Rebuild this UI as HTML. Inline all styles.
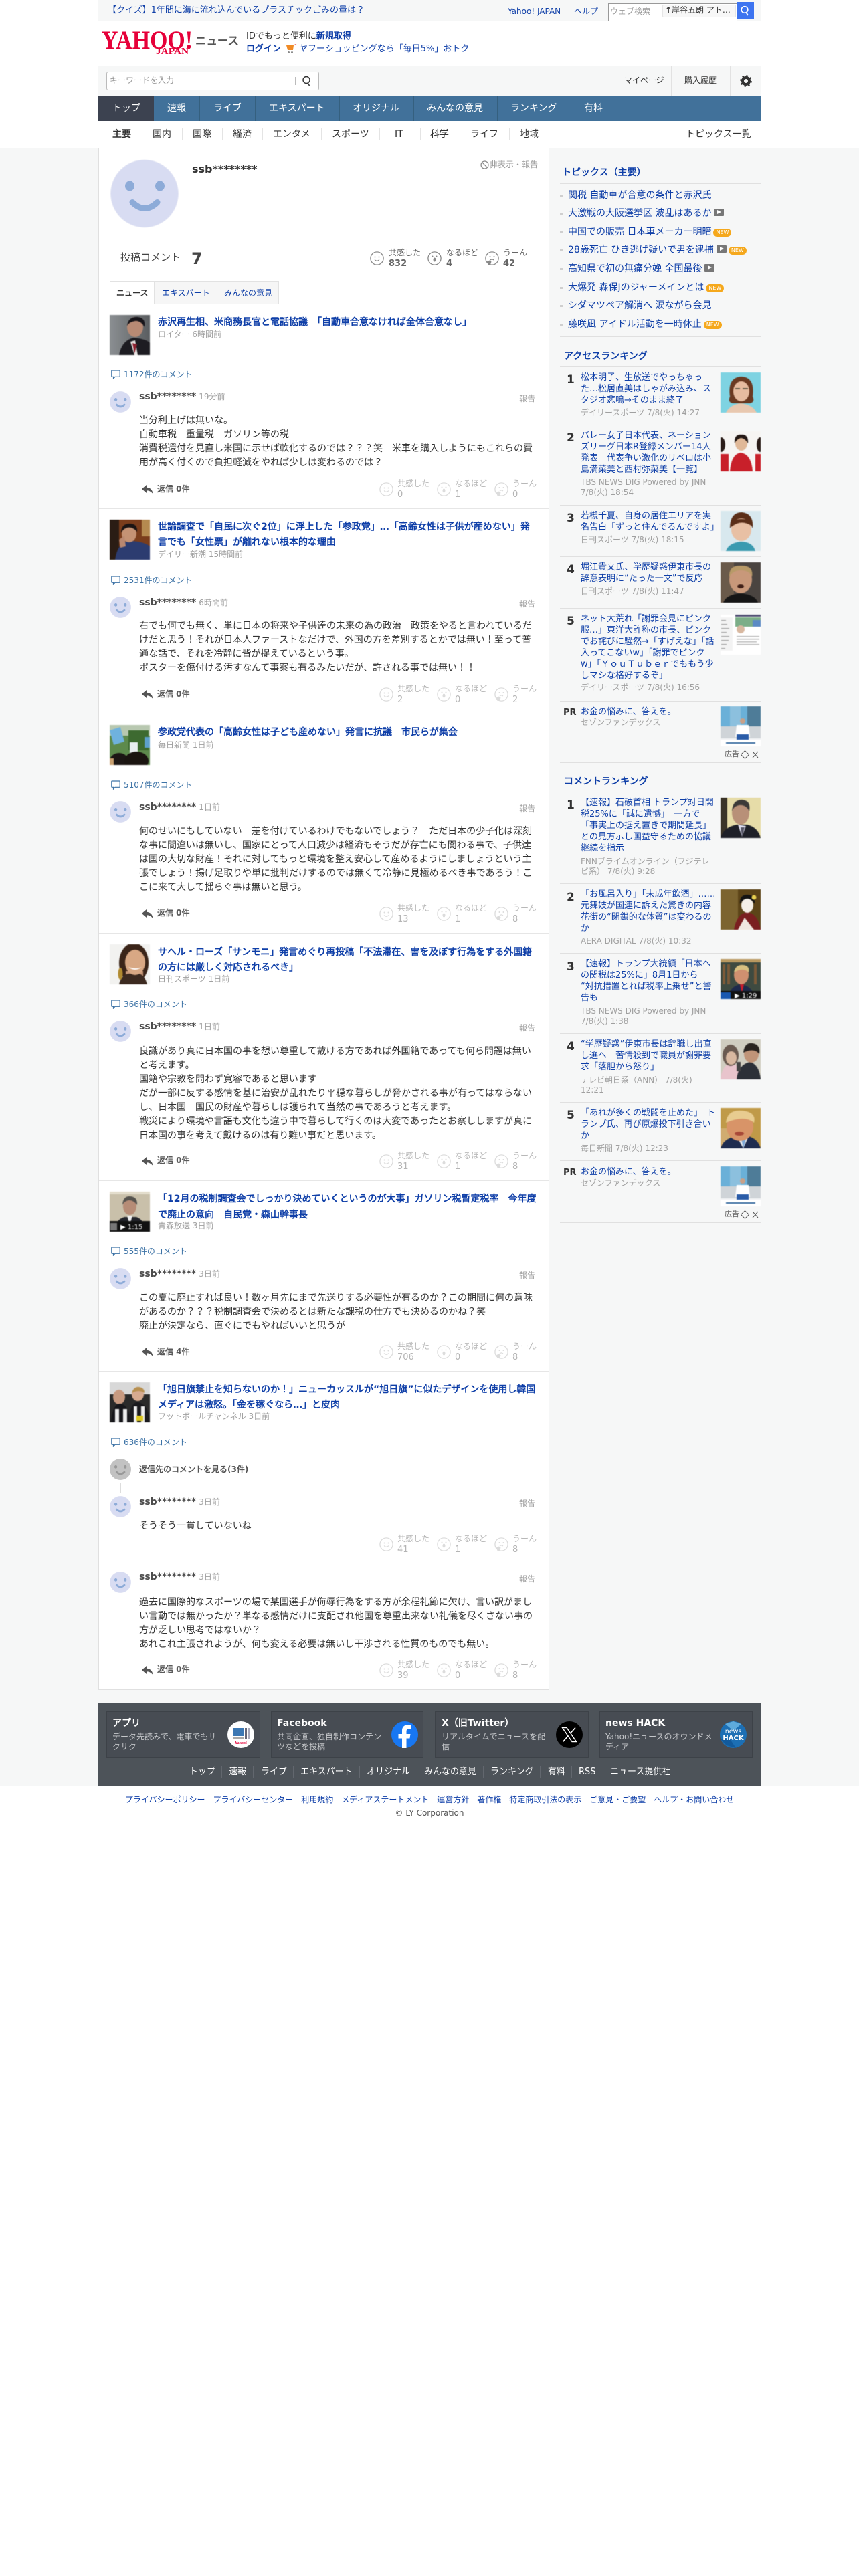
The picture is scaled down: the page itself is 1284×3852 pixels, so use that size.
<!DOCTYPE html>
<html lang="ja"><head><meta charset="utf-8"><title>ssb******** - Yahoo!ニュース</title>
<style>
html,body{margin:0;padding:0;background:#fff}
body{position:relative;width:1284px;height:3852px;overflow:hidden;font-family:"DejaVu Sans",sans-serif;font-size:12px;color:#333}
.k{font-family:"Noto Sans CJK JP",sans-serif}
.b{position:absolute}
.t{position:absolute;white-space:nowrap;line-height:20px}
a{color:inherit;text-decoration:none}
.ln{color:#0f3fa8}
.ttl{position:absolute;left:236px;white-space:nowrap;font-size:14px;font-weight:bold;line-height:23px;color:#0f3fa8}
.src{position:absolute;left:236px;white-space:nowrap;font-size:12px;line-height:20px;color:#a0a0a0}
.cc{position:absolute;left:185px;white-space:nowrap;font-size:12px;line-height:20px;color:#3d73a6}
.nm{position:absolute;left:208px;white-space:nowrap;font-size:14px;line-height:20px;font-weight:bold;color:#4d4d4d}
.nm span{font-weight:normal;font-size:12px;color:#a0a0a0;margin-left:4px}
.rp{position:absolute;left:776px;font-size:12px;line-height:20px;color:#a0a0a0}
.bd{position:absolute;left:208px;white-space:nowrap;font-size:14px;line-height:21px;color:#333}
.re{position:absolute;left:235px;white-space:nowrap;font-size:12px;line-height:20px;font-weight:bold;color:#5a5a5a}
.sp{position:absolute;left:148px;width:672px;height:1px;background:#e6e6e6}
.lb{position:absolute;white-space:nowrap;font-size:12px;line-height:20px;color:#b8b8b8}
.ct{position:absolute;white-space:nowrap;font-size:13px;line-height:20px;color:#b4b4b4}
.nv{position:absolute;top:143px;height:38px;line-height:38px;color:#fff;font-size:14px;white-space:nowrap}
.dv{position:absolute;top:143px;width:1px;height:38px;background:#35607f}
.sn{position:absolute;top:191px;line-height:20px;font-size:14px;color:#333;white-space:nowrap}
.sd{position:absolute;top:192px;width:1px;height:18px;background:#e4e4e4}
.tp{position:absolute;left:849px;white-space:nowrap;font-size:14px;line-height:20px;color:#0f3fa8}
.bu{position:absolute;left:837px;width:4px;height:3px;background:#cfcfcf}
.hd{position:absolute;white-space:nowrap;font-size:14px;font-weight:bold;line-height:20px;color:#0f3fa8}
.hl{position:absolute;left:837px;width:300px;height:1px;background:#e0e0e0}
.rk{position:absolute;left:847px;font-size:17px;font-weight:bold;line-height:20px;color:#333}
.st{position:absolute;left:868px;white-space:nowrap;font-size:13px;line-height:17px;color:#0f3fa8}
.ss{position:absolute;left:868px;white-space:nowrap;font-size:12px;line-height:15px;color:#a0a0a0}
.th{position:absolute;width:60px;height:60px;display:block;filter:blur(.6px)}
.nw{display:inline-block;width:27px;height:12px;border-radius:6px;background:#f5a81c;color:#fff;font-size:8px;line-height:12px;text-align:center;vertical-align:1px;margin-left:3px}
.vd{display:inline-block;width:15px;height:11px;background:#777;border-radius:1px;position:relative;vertical-align:0;margin-left:4px}
.vd:after{content:"";position:absolute;left:5px;top:2px;border-left:6px solid #fff;border-top:3.5px solid transparent;border-bottom:3.5px solid transparent}
.fc{position:absolute;top:2559px;height:68px;background:#474c53;border:1px solid #3d4248}
.ft{position:absolute;white-space:nowrap;font-size:14px;font-weight:bold;line-height:20px;color:#fff}
.fd{position:absolute;white-space:nowrap;font-size:12px;line-height:14.5px;color:#c4c6c9}
.fn{position:absolute;top:2640px;white-space:nowrap;font-size:13px;line-height:20px;color:#fff}
.fs{position:absolute;top:2641px;width:1px;height:18px;background:#62676e}
.ic{position:absolute;width:21px;height:21px}
</style></head><body>

<svg width="0" height="0" style="position:absolute">
<symbol id="av" viewBox="0 0 102 102"><circle cx="51" cy="51" r="50.5" fill="#d8dcf2" stroke="#e8eaf6"/><ellipse cx="29" cy="39.5" rx="7" ry="7.5" fill="#8dabd8"/><ellipse cx="74" cy="39.5" rx="7" ry="7.5" fill="#8dabd8"/><path d="M33 64Q51.5 82 70 64" fill="none" stroke="#8dabd8" stroke-width="9" stroke-linecap="round"/></symbol>
<symbol id="avg" viewBox="0 0 102 102"><circle cx="51" cy="51" r="51" fill="#c2c2c2"/><ellipse cx="29" cy="39.5" rx="7" ry="7.5" fill="#999"/><ellipse cx="74" cy="39.5" rx="7" ry="7.5" fill="#999"/><path d="M33 64Q51.5 82 70 64" fill="none" stroke="#999" stroke-width="9" stroke-linecap="round"/></symbol>
<symbol id="f1" viewBox="0 0 21 21"><circle cx="10.5" cy="10.5" r="9.6" fill="none" stroke="currentColor" stroke-width="1.3"/><circle cx="7.5" cy="8.5" r="1" fill="currentColor"/><circle cx="13.5" cy="8.5" r="1" fill="currentColor"/><path d="M7 12.5Q10.5 16 14 12.5" fill="none" stroke="currentColor" stroke-width="1.2"/></symbol>
<symbol id="f2" viewBox="0 0 21 21"><circle cx="10.5" cy="10.5" r="9.6" fill="none" stroke="currentColor" stroke-width="1.3"/><circle cx="7.5" cy="7.5" r="1" fill="currentColor"/><circle cx="13.5" cy="7.5" r="1" fill="currentColor"/><ellipse cx="10.5" cy="12.5" rx="2" ry="3" fill="currentColor"/></symbol>
<symbol id="f3" viewBox="0 0 21 21"><circle cx="10.5" cy="10.5" r="9.6" fill="none" stroke="currentColor" stroke-width="1.3"/><circle cx="7.5" cy="8" r="1" fill="currentColor"/><circle cx="13.5" cy="8" r="1" fill="currentColor"/><path d="M8 13Q10.5 10.8 13 13" fill="none" stroke="currentColor" stroke-width="1.2"/><path d="M3 15L7 13.5L9.5 15.5L8 20L4.5 20Z" fill="currentColor"/></symbol>
<symbol id="cm" viewBox="0 0 14 14"><path d="M1.5 1H12.5Q13.2 1 13.2 1.8V9.5Q13.2 10.3 12.5 10.3H6L3.5 13V10.3H1.5Q.8 10.3.8 9.5V1.8Q.8 1 1.5 1Z" fill="none" stroke="#3d73a6" stroke-width="1.2"/></symbol>
<symbol id="ar" viewBox="0 0 17 13"><path d="M7 0L0 6L7 12V8.2C10.5 8.2 13.5 9.5 16.5 13C16 7.5 12.5 4 7 3.8Z" fill="#555"/></symbol>
</svg>

<!-- top bar -->
<div class="b" style="left:147px;top:0;width:990px;height:32px;background:#f6f7f7"></div>
<div class="t ln" style="left:161px;top:6px;font-size:13px">【クイズ】1年間に海に流れ込んでいるプラスチックごみの量は？</div>
<div class="t ln" style="left:759px;top:7px;font-size:12px">Yahoo! JAPAN</div>
<div class="t ln" style="left:858px;top:7px;font-size:12px">ヘルプ</div>
<div class="b" style="left:909px;top:5px;width:192px;height:25px;background:#fff;border-top:1px solid #999;border-left:1px solid #999;border-bottom:1px solid #bbb"></div>
<div class="t" style="left:912px;top:7px;color:#999;font-size:12px">ウェブ検索</div>
<div class="b" style="left:990px;top:7px;width:108px;height:17px;background:#f7f7f7;border:1px solid #e5e5e5;border-radius:2px"></div>
<div class="t" style="left:994px;top:5px;color:#333;font-size:12px;width:102px;overflow:hidden"><b>↑</b>岸谷五朗 アト…</div>
<div class="b" style="left:1101px;top:3px;width:26px;height:26px;background:#3d74f0"></div>
<svg class="b" style="left:1105px;top:7px" width="18" height="18" viewBox="0 0 18 18"><circle cx="8" cy="7.5" r="4.8" fill="none" stroke="#fff" stroke-width="1.6"/><path d="M10.5 12L13 16" stroke="#fff" stroke-width="1.8"/></svg>

<!-- logo -->
<svg class="b" style="left:150px;top:40px" width="210" height="45" viewBox="0 0 210 45">
<text x="2" y="33" font-family="Liberation Serif,serif" font-weight="bold" font-size="39" fill="#e60039" textLength="136" lengthAdjust="spacingAndGlyphs">YAHOO!</text>
<text x="83" y="41" font-family="Liberation Serif,serif" font-weight="bold" font-size="14" fill="#e60039" textLength="49" lengthAdjust="spacingAndGlyphs">JAPAN</text>
<text x="142" y="27" font-family="DejaVu Sans,sans-serif" font-weight="bold" font-size="17" fill="#555" textLength="65" lengthAdjust="spacingAndGlyphs">ニュース</text>
</svg>
<div class="t" style="left:368px;top:45px;font-size:13px;color:#333">IDでもっと便利に<b class="ln">新規取得</b></div>
<div class="t ln" style="left:368px;top:64px;font-size:13px;font-weight:bold">ログイン</div>
<svg class="b" style="left:427px;top:66px" width="17" height="15" viewBox="0 0 17 15"><path d="M1 2H12L11 9H3Z" fill="#f08a24"/><path d="M12 2L16 0" stroke="#e66" stroke-width="1"/><circle cx="4.5" cy="12.5" r="1.5" fill="#888"/><circle cx="9.5" cy="12.5" r="1.5" fill="#888"/></svg>
<div class="t ln" style="left:447px;top:64px;font-size:13px">ヤフーショッピングなら「毎日5%」おトク</div>

<!-- search strip -->
<div class="b" style="left:147px;top:98px;width:990px;height:45px;background:#f6f7f7;border-top:1px solid #e2e2e2;box-sizing:border-box"></div>
<div class="b" style="left:159px;top:107px;width:316px;height:26px;background:#fff;border:1px solid #bbb;border-radius:3px"></div>
<div class="t" style="left:164px;top:110px;color:#999;font-size:12px">キーワードを入力</div>
<div class="b" style="left:441px;top:115px;width:1px;height:12px;background:#bbb"></div>
<svg class="b" style="left:450px;top:112px" width="17" height="18" viewBox="0 0 17 18"><circle cx="8" cy="7.5" r="5" fill="none" stroke="#333" stroke-width="1.4"/><path d="M10.5 12.5L12.5 16" stroke="#333" stroke-width="1.5"/></svg>
<div class="b" style="left:922px;top:99px;width:1px;height:44px;background:#e2e2e2"></div>
<div class="b" style="left:1003px;top:99px;width:1px;height:44px;background:#e2e2e2"></div>
<div class="b" style="left:1091px;top:99px;width:1px;height:44px;background:#e2e2e2"></div>
<div class="t" style="left:933px;top:110px;font-size:12px">マイページ</div>
<div class="t" style="left:1023px;top:110px;font-size:12px">購入履歴</div>
<svg class="b" style="left:1106px;top:112px" width="18" height="18" viewBox="0 0 18 18"><circle cx="9" cy="9" r="5" fill="none" stroke="#333" stroke-width="4"/><circle cx="9" cy="9" r="7.5" fill="none" stroke="#333" stroke-width="2.5" stroke-dasharray="2.6 3.3"/></svg>

<!-- nav -->
<div class="b" style="left:147px;top:143px;width:775px;height:38px;background:#41719a"></div>
<div class="b" style="left:922px;top:143px;width:215px;height:38px;background:#41719a"></div>
<div class="b" style="left:147px;top:143px;width:83px;height:38px;background:#3c4250"></div>
<div class="nv" style="left:168px">トップ</div>
<div class="nv" style="left:250px">速報</div>
<div class="nv" style="left:319px">ライブ</div>
<div class="nv" style="left:402px">エキスパート</div>
<div class="nv" style="left:527px">オリジナル</div>
<div class="nv" style="left:638px">みんなの意見</div>
<div class="nv" style="left:763px">ランキング</div>
<div class="nv" style="left:873px">有料</div>
<div class="dv" style="left:298px"></div><div class="dv" style="left:381px"></div><div class="dv" style="left:507px"></div><div class="dv" style="left:618px"></div><div class="dv" style="left:743px"></div><div class="dv" style="left:853px"></div><div class="dv" style="left:922px"></div>

<!-- sub nav -->
<div class="sn" style="left:168px;font-weight:bold">主要</div>
<div class="sn" style="left:228px">国内</div>
<div class="sn" style="left:288px">国際</div>
<div class="sn" style="left:348px">経済</div>
<div class="sn" style="left:408px">エンタメ</div>
<div class="sn" style="left:496px">スポーツ</div>
<div class="sn" style="left:590px">IT</div>
<div class="sn" style="left:643px">科学</div>
<div class="sn" style="left:703px">ライフ</div>
<div class="sn" style="left:777px">地域</div>
<div class="sn" style="left:1025px">トピックス一覧</div>
<div class="sd" style="left:212px"></div><div class="sd" style="left:272px"></div><div class="sd" style="left:332px"></div><div class="sd" style="left:392px"></div><div class="sd" style="left:480px"></div><div class="sd" style="left:567px"></div><div class="sd" style="left:628px"></div><div class="sd" style="left:687px"></div><div class="sd" style="left:761px"></div>

<!-- grey body -->
<div class="b" style="left:0;top:221px;width:1284px;height:2450px;background:#f6f7f7;border-top:1px solid #e2e2e2;box-sizing:border-box"></div>
<!-- main card -->
<div class="b" style="left:147px;top:222px;width:674px;height:2305px;background:#fff;border:1px solid #e0e0e0;border-top:0;box-sizing:border-box"></div>

<svg class="b" style="left:165px;top:238px" width="102" height="103"><use href="#av"/></svg>
<div class="t" style="left:287px;top:243px;font-size:16px;font-weight:bold;color:#333">ssb********</div>
<svg class="b" style="left:718px;top:240px" width="13" height="13" viewBox="0 0 13 13"><circle cx="6.5" cy="6.5" r="5.5" fill="none" stroke="#888" stroke-width="1.2"/><path d="M2.8 2.8L10.2 10.2" stroke="#888" stroke-width="1.2"/></svg>
<div class="t" style="left:732px;top:236px;color:#999;font-size:12px">非表示<span class="k">・</span>報告</div>
<div class="sp" style="top:354px"></div>
<div class="t" style="left:180px;top:375px;font-size:15px;color:#444">投稿コメント</div>
<div class="t" style="left:286px;top:375px;font-size:24px;font-weight:bold;color:#444;line-height:24px">7</div>
<svg class="ic" style="left:553px;top:376px;color:#888"><use href="#f1"/></svg>
<svg class="ic" style="left:639px;top:376px;color:#888"><use href="#f2"/></svg>
<svg class="ic" style="left:725px;top:376px;color:#888"><use href="#f3"/></svg>
<div class="lb" style="left:581px;top:368px;color:#666">共感した</div><div class="lb" style="left:667px;top:368px;color:#666">なるほど</div><div class="lb" style="left:752px;top:368px;color:#666">うーん</div>
<div class="ct" style="left:581px;top:385px;color:#666;font-weight:bold">832</div><div class="ct" style="left:667px;top:385px;color:#666;font-weight:bold">4</div><div class="ct" style="left:752px;top:385px;color:#666;font-weight:bold">42</div>

<!-- tabs -->
<div class="b" style="left:148px;top:454px;width:672px;height:1px;background:#e0e0e0"></div>
<div class="b" style="left:164px;top:420px;width:253px;height:34px;background:#f6f6f6;border:1px solid #e2e2e2;border-bottom:0;box-sizing:border-box"></div>
<div class="b" style="left:164px;top:420px;width:67px;height:35px;background:#fff;border:1px solid #e2e2e2;border-bottom:0;box-sizing:border-box"></div>
<div class="b" style="left:324px;top:420px;width:1px;height:34px;background:#e2e2e2"></div>
<div class="t" style="left:174px;top:428px;font-weight:bold;color:#333">ニュース</div>
<div class="t ln" style="left:242px;top:428px">エキスパート</div>
<div class="t ln" style="left:335px;top:428px">みんなの意見</div>

<!-- article 1 -->
<svg class="th" style="left:164px;top:471px" viewBox="0 0 60 60"><defs><linearGradient id="g1" x1="0" y1="0" x2="1" y2="0"><stop offset="0" stop-color="#8b8f92"/><stop offset="1" stop-color="#5a5d60"/></linearGradient></defs><rect width="60" height="60" fill="url(#g1)"/><path d="M14 60Q18 38 36 34Q55 36 60 42V60Z" fill="#1d1c22"/><ellipse cx="38" cy="18" rx="12" ry="15" fill="#b88a74"/><path d="M26 16Q28 2 42 3Q54 4 52 18Q46 8 38 9Q30 10 26 16Z" fill="#17151a"/><path d="M31 40L37 60H42L38 38Z" fill="#e8e6e4"/><path d="M34 42L37 58L41 44Z" fill="#8c2230"/></svg>
<div class="ttl" style="top:471px">赤沢再生相、米商務長官と電話協議　「自動車合意なければ全体合意なし」</div>
<div class="src" style="top:490px">ロイター 6時間前</div>
<svg class="b" style="left:166px;top:553px" width="14" height="14"><use href="#cm"/></svg>
<div class="cc" style="top:550px">1172件のコメント</div>
<svg class="b" style="left:164px;top:585px" width="32" height="32"><use href="#av"/></svg>
<div class="nm" style="top:583px">ssb********<span>19分前</span></div>
<div class="rp" style="top:586px">報告</div>
<div class="bd" style="top:619px">当分利上げは無いな。<br>自動車税　重量税　ガソリン等の税<br>消費税還付を見直し米国に示せば軟化するのでは？？？笑　米車を購入しようにもこれらの費<br>用が高く付くので負担軽減をやれば少しは変わるのでは？</div>
<svg class="b" style="left:212px;top:725px" width="17" height="13"><use href="#ar"/></svg>
<div class="re" style="top:721px">返信 0件</div>
<svg class="ic" style="left:567px;top:721px;color:#dcdcdc"><use href="#f1"/></svg><svg class="ic" style="left:653px;top:721px;color:#dcdcdc"><use href="#f2"/></svg><svg class="ic" style="left:739px;top:721px;color:#dcdcdc"><use href="#f3"/></svg>
<div class="lb" style="left:594px;top:713px">共感した</div><div class="lb" style="left:680px;top:713px">なるほど</div><div class="lb" style="left:766px;top:713px">うーん</div>
<div class="ct" style="left:594px;top:730px">0</div><div class="ct" style="left:680px;top:730px">1</div><div class="ct" style="left:766px;top:730px">0</div>
<div class="sp" style="top:760px"></div>

<!-- article 2 -->
<svg class="th" style="left:164px;top:777px" viewBox="0 0 60 60"><rect width="60" height="60" fill="#7a3d1c"/><rect x="0" y="0" width="14" height="60" fill="#2a1c14"/><rect x="48" width="12" height="25" fill="#b58a50"/><path d="M8 60Q12 34 28 32Q50 32 60 40V60Z" fill="#2c3c70"/><ellipse cx="29" cy="21" rx="11" ry="13" fill="#c49274"/><path d="M17 20Q17 6 30 6Q42 6 41 18Q34 10 26 12Q20 14 17 20Z" fill="#1a1414"/><path d="M14 30L22 24L24 40L16 42Z" fill="#b98870"/></svg>
<div class="ttl" style="top:777px">世論調査で「自民に次ぐ2位」に浮上した「参政党」…「高齢女性は子供が産めない」発<br>言でも「女性票」が離れない根本的な理由</div>
<div class="src" style="top:819px">デイリー新潮 15時間前</div>
<svg class="b" style="left:166px;top:861px" width="14" height="14"><use href="#cm"/></svg>
<div class="cc" style="top:858px">2531件のコメント</div>
<svg class="b" style="left:164px;top:892px" width="32" height="32"><use href="#av"/></svg>
<div class="nm" style="top:891px">ssb********<span>6時間前</span></div>
<div class="rp" style="top:893px">報告</div>
<div class="bd" style="top:926px">右でも何でも無く、単に日本の将来や子供達の未来の為の政治　政策をやると言われているだ<br>けだと思う！それが日本人ファーストなだけで、外国の方を差別するとかでは無い！至って普<br>通な話で、それを冷静に皆が捉えているという事。<br>ポスターを傷付ける汚すなんて事案も有るみたいだが、許される事では無い！！</div>
<svg class="b" style="left:212px;top:1032px" width="17" height="13"><use href="#ar"/></svg>
<div class="re" style="top:1028px">返信 0件</div>
<svg class="ic" style="left:567px;top:1028px;color:#dcdcdc"><use href="#f1"/></svg><svg class="ic" style="left:653px;top:1028px;color:#dcdcdc"><use href="#f2"/></svg><svg class="ic" style="left:739px;top:1028px;color:#dcdcdc"><use href="#f3"/></svg>
<div class="lb" style="left:594px;top:1020px">共感した</div><div class="lb" style="left:680px;top:1020px">なるほど</div><div class="lb" style="left:766px;top:1020px">うーん</div>
<div class="ct" style="left:594px;top:1037px">2</div><div class="ct" style="left:680px;top:1037px">0</div><div class="ct" style="left:766px;top:1037px">2</div>
<div class="sp" style="top:1067px"></div>

<!-- article 3 -->
<svg class="th" style="left:164px;top:1084px" viewBox="0 0 60 60"><rect width="60" height="60" fill="#5d8a4c"/><rect y="0" width="60" height="16" fill="#b8c8b0"/><rect x="28" y="8" width="30" height="30" fill="#3d6a30"/><path d="M0 8L16 3L22 25L6 30Z" fill="#6fb2de"/><rect x="30" y="26" width="12" height="18" fill="#e8eef0"/><ellipse cx="14" cy="54" rx="14" ry="12" fill="#1c1614"/><ellipse cx="40" cy="54" rx="18" ry="14" fill="#1a1410"/><rect x="52" y="18" width="8" height="16" fill="#5da0cc"/><rect x="0" y="50" width="6" height="10" fill="#c9a070"/></svg>
<div class="ttl" style="top:1084px">参政党代表の「高齢女性は子ども産めない」発言に抗議　市民らが集会</div>
<div class="src" style="top:1104px">毎日新聞 1日前</div>
<svg class="b" style="left:166px;top:1167px" width="14" height="14"><use href="#cm"/></svg>
<div class="cc" style="top:1164px">5107件のコメント</div>
<svg class="b" style="left:164px;top:1198px" width="32" height="32"><use href="#av"/></svg>
<div class="nm" style="top:1197px">ssb********<span>1日前</span></div>
<div class="rp" style="top:1199px">報告</div>
<div class="bd" style="top:1233px">何のせいにもしていない　差を付けているわけでもないでしょう？　ただ日本の少子化は深刻<br>な事に間違いは無いし、国家にとって人口減少は経済もそうだが存亡にも関わる事で、子供達<br>は国の大切な財産！それに対してもっと環境を整え安心して産めるようにしましょうという主<br>張でしょう！揚げ足取りや単に批判だけするのでは無くて冷静に見極めるべき事であろう！こ<br>こに来て大して揺らぐ事は無いと思う。</div>
<svg class="b" style="left:212px;top:1360px" width="17" height="13"><use href="#ar"/></svg>
<div class="re" style="top:1355px">返信 0件</div>
<svg class="ic" style="left:567px;top:1356px;color:#dcdcdc"><use href="#f1"/></svg><svg class="ic" style="left:653px;top:1356px;color:#dcdcdc"><use href="#f2"/></svg><svg class="ic" style="left:739px;top:1356px;color:#dcdcdc"><use href="#f3"/></svg>
<div class="lb" style="left:594px;top:1348px">共感した</div><div class="lb" style="left:680px;top:1348px">なるほど</div><div class="lb" style="left:766px;top:1348px">うーん</div>
<div class="ct" style="left:594px;top:1365px">13</div><div class="ct" style="left:680px;top:1365px">1</div><div class="ct" style="left:766px;top:1365px">8</div>
<div class="sp" style="top:1395px"></div>

<!-- article 4 -->
<svg class="th" style="left:164px;top:1412px" viewBox="0 0 60 60"><rect width="60" height="60" fill="#f2f2f0"/><ellipse cx="36" cy="28" rx="22" ry="30" fill="#3a2418"/><rect x="24" y="40" width="26" height="20" fill="#c89878"/><path d="M14 60Q18 44 30 44H44Q52 46 56 60Z" fill="#3c2a20"/><ellipse cx="38" cy="27" rx="15" ry="19" fill="#d8a884"/><path d="M28 34Q38 42 48 34Q40 38 28 34Z" fill="#fff"/><ellipse cx="16" cy="44" rx="3.5" ry="9" fill="#b08a30"/></svg>
<div class="ttl" style="top:1412px">サヘル<span class="k">・</span>ローズ「サンモニ」発言めぐり再投稿「不法滞在、害を及ぼす行為をする外国籍<br>の方には厳しく対応されるべき」</div>
<div class="src" style="top:1454px">日刊スポーツ 1日前</div>
<svg class="b" style="left:166px;top:1495px" width="14" height="14"><use href="#cm"/></svg>
<div class="cc" style="top:1492px">366件のコメント</div>
<svg class="b" style="left:164px;top:1526px" width="32" height="32"><use href="#av"/></svg>
<div class="nm" style="top:1525px">ssb********<span>1日前</span></div>
<div class="rp" style="top:1527px">報告</div>
<div class="bd" style="top:1562px">良識があり真に日本国の事を想い尊重して戴ける方であれば外国籍であっても何ら問題は無い<br>と考えます。<br>国籍や宗教を問わず寛容であると思います<br>だが一部に反する感情を基に治安が乱れたり平穏な暮らしが脅かされる事が有ってはならない<br>し、日本国　国民の財産や暮らしは護られて当然の事であろうと考えます。<br>戦災により環境や言語も文化も違う中で暮らして行くのは大変であったとお察ししますが真に<br>日本国の事を考えて戴けるのは有り難い事だと思います。</div>
<svg class="b" style="left:212px;top:1730px" width="17" height="13"><use href="#ar"/></svg>
<div class="re" style="top:1725px">返信 0件</div>
<svg class="ic" style="left:567px;top:1726px;color:#dcdcdc"><use href="#f1"/></svg><svg class="ic" style="left:653px;top:1726px;color:#dcdcdc"><use href="#f2"/></svg><svg class="ic" style="left:739px;top:1726px;color:#dcdcdc"><use href="#f3"/></svg>
<div class="lb" style="left:594px;top:1718px">共感した</div><div class="lb" style="left:680px;top:1718px">なるほど</div><div class="lb" style="left:766px;top:1718px">うーん</div>
<div class="ct" style="left:594px;top:1735px">31</div><div class="ct" style="left:680px;top:1735px">1</div><div class="ct" style="left:766px;top:1735px">8</div>
<div class="sp" style="top:1765px"></div>

<!-- article 5 -->
<svg class="th" style="left:164px;top:1782px" viewBox="0 0 60 60"><rect width="60" height="60" fill="#c9c0aa"/><rect y="0" width="60" height="4" fill="#e3ddcc"/><path d="M6 60Q8 42 22 38H40Q52 42 54 60Z" fill="#23252c"/><ellipse cx="30" cy="22" rx="10" ry="13" fill="#b68c76"/><path d="M19 20Q20 6 31 7Q42 8 41 20Q35 12 28 13Q22 14 19 20Z" fill="#55534e"/><path d="M26 36L30 50L34 36Z" fill="#eee"/><rect y="44" width="60" height="16" fill="#111"/><text x="16" y="56" font-size="10" fill="#fff" font-family="DejaVu Sans,sans-serif">▶ 1:15</text><rect x="1" y="47" width="10" height="11" fill="#777"/></svg>
<div class="ttl" style="top:1782px">「12月の税制調査会でしっかり決めていくというのが大事」ガソリン税暫定税率　今年度<br>で廃止の意向　自民党<span class="k">・</span>森山幹事長</div>
<div class="src" style="top:1823px">青森放送 3日前</div>
<svg class="b" style="left:166px;top:1864px" width="14" height="14"><use href="#cm"/></svg>
<div class="cc" style="top:1861px">555件のコメント</div>
<svg class="b" style="left:164px;top:1896px" width="32" height="32"><use href="#av"/></svg>
<div class="nm" style="top:1895px">ssb********<span>3日前</span></div>
<div class="rp" style="top:1897px">報告</div>
<div class="bd" style="top:1931px">この夏に廃止すれば良い！数ヶ月先にまで先送りする必要性が有るのか？この期間に何の意味<br>があるのか？？？税制調査会で決めるとは新たな課税の仕方でも決めるのかね？笑<br>廃止が決定なら、直ぐにでもやればいいと思うが</div>
<svg class="b" style="left:212px;top:2015px" width="17" height="13"><use href="#ar"/></svg>
<div class="re" style="top:2011px">返信 4件</div>
<svg class="ic" style="left:567px;top:2011px;color:#dcdcdc"><use href="#f1"/></svg><svg class="ic" style="left:653px;top:2011px;color:#dcdcdc"><use href="#f2"/></svg><svg class="ic" style="left:739px;top:2011px;color:#dcdcdc"><use href="#f3"/></svg>
<div class="lb" style="left:594px;top:2003px">共感した</div><div class="lb" style="left:680px;top:2003px">なるほど</div><div class="lb" style="left:766px;top:2003px">うーん</div>
<div class="ct" style="left:594px;top:2020px">706</div><div class="ct" style="left:680px;top:2020px">0</div><div class="ct" style="left:766px;top:2020px">8</div>
<div class="sp" style="top:2050px"></div>

<!-- article 6 -->
<svg class="th" style="left:164px;top:2067px" viewBox="0 0 60 60"><rect width="60" height="60" fill="#d8d8d8"/><rect y="18" width="60" height="42" fill="#2a2a2a"/><ellipse cx="14" cy="22" rx="9" ry="11" fill="#c89a80"/><path d="M2 60Q4 32 16 32Q30 34 30 60Z" fill="#16161a"/><path d="M8 40H14V60H8ZM20 40H26V60H20Z" fill="#eee"/><ellipse cx="42" cy="18" rx="9" ry="10" fill="#d6aa90"/><path d="M33 16Q36 6 44 7Q52 8 52 16Q44 10 33 16Z" fill="#b89050"/><path d="M28 60Q30 30 42 30Q58 32 60 60Z" fill="#1a1a1e"/><rect x="36" y="36" width="5" height="24" fill="#eee"/><rect x="47" y="36" width="5" height="24" fill="#eee"/><rect x="40" y="50" width="10" height="8" fill="#dcc820"/></svg>
<div class="ttl" style="top:2067px">「旭日旗禁止を知らないのか！」ニューカッスルが“旭日旗”に似たデザインを使用し韓国<br>メディアは激怒。「金を稼ぐなら…」と皮肉</div>
<div class="src" style="top:2108px">フットボールチャンネル 3日前</div>
<svg class="b" style="left:166px;top:2150px" width="14" height="14"><use href="#cm"/></svg>
<div class="cc" style="top:2147px">636件のコメント</div>
<svg class="b" style="left:164px;top:2181px" width="32" height="32"><use href="#avg"/></svg>
<div class="t" style="left:208px;top:2187px;font-weight:bold;color:#555">返信先のコメントを見る(3件)</div>
<div class="b" style="left:179px;top:2217px;width:2px;height:16px;background:#ddd"></div>
<svg class="b" style="left:164px;top:2237px" width="32" height="32"><use href="#av"/></svg>
<div class="nm" style="top:2236px">ssb********<span>3日前</span></div>
<div class="rp" style="top:2238px">報告</div>
<div class="bd" style="top:2272px">そうそう一貫していないね</div>
<svg class="ic" style="left:567px;top:2299px;color:#dcdcdc"><use href="#f1"/></svg><svg class="ic" style="left:653px;top:2299px;color:#dcdcdc"><use href="#f2"/></svg><svg class="ic" style="left:739px;top:2299px;color:#dcdcdc"><use href="#f3"/></svg>
<div class="lb" style="left:594px;top:2291px">共感した</div><div class="lb" style="left:680px;top:2291px">なるほど</div><div class="lb" style="left:766px;top:2291px">うーん</div>
<div class="ct" style="left:594px;top:2308px">41</div><div class="ct" style="left:680px;top:2308px">1</div><div class="ct" style="left:766px;top:2308px">8</div>

<svg class="b" style="left:164px;top:2350px" width="32" height="32"><use href="#av"/></svg>
<div class="nm" style="top:2348px">ssb********<span>3日前</span></div>
<div class="rp" style="top:2351px">報告</div>
<div class="bd" style="top:2386px">過去に国際的なスポーツの場で某国選手が侮辱行為をする方が余程礼節に欠け、言い訳がまし<br>い言動では無かったか？単なる感情だけに支配され他国を尊重出来ない礼儀を尽くさない事の<br>方が乏しい思考ではないか？<br>あれこれ主張されようが、何も変える必要は無いし干渉される性質のものでも無い。</div>
<svg class="b" style="left:212px;top:2491px" width="17" height="13"><use href="#ar"/></svg>
<div class="re" style="top:2486px">返信 0件</div>
<svg class="ic" style="left:567px;top:2487px;color:#dcdcdc"><use href="#f1"/></svg><svg class="ic" style="left:653px;top:2487px;color:#dcdcdc"><use href="#f2"/></svg><svg class="ic" style="left:739px;top:2487px;color:#dcdcdc"><use href="#f3"/></svg>
<div class="lb" style="left:594px;top:2479px">共感した</div><div class="lb" style="left:680px;top:2479px">なるほど</div><div class="lb" style="left:766px;top:2479px">うーん</div>
<div class="ct" style="left:594px;top:2496px">39</div><div class="ct" style="left:680px;top:2496px">0</div><div class="ct" style="left:766px;top:2496px">8</div>

<!-- sidebar topics -->
<div class="hd" style="left:840px;top:248px">トピックス（主要）</div>
<div class="hl" style="top:274px"></div>
<div class="bu" style="top:291px"></div><div class="tp" style="top:282px">関税 自動車が合意の条件と赤沢氏</div>
<div class="bu" style="top:318px"></div><div class="tp" style="top:309px">大激戦の大阪選挙区 波乱はあるか<i class="vd"></i></div>
<div class="bu" style="top:346px"></div><div class="tp" style="top:337px">中国での販売 日本車メーカー明暗<span class="nw">NEW</span></div>
<div class="bu" style="top:373px"></div><div class="tp" style="top:364px">28歳死亡 ひき逃げ疑いで男を逮捕<i class="vd"></i><span class="nw">NEW</span></div>
<div class="bu" style="top:401px"></div><div class="tp" style="top:392px">高知県で初の無痛分娩 全国最後<i class="vd"></i></div>
<div class="bu" style="top:429px"></div><div class="tp" style="top:420px">大爆発 森保Jのジャーメインとは<span class="nw">NEW</span></div>
<div class="bu" style="top:456px"></div><div class="tp" style="top:447px">シダマツペア解消へ 涙ながら会見</div>
<div class="bu" style="top:484px"></div><div class="tp" style="top:475px">藤咲凪 アイドル活動を一時休止<span class="nw">NEW</span></div>
<div class="hl" style="top:503px"></div>

<!-- access ranking -->
<div class="hd" style="left:843px;top:523px">アクセスランキング</div>
<div class="hl" style="top:548px"></div>

<div class="rk" style="top:558px">1</div>
<div class="st" style="top:556px">松本明子、生放送でやっちゃっ<br>た…松居直美はしゃがみ込み、ス<br>タジオ悲鳴→そのまま終了</div>
<div class="ss" style="top:610px">デイリースポーツ 7/8(火) 14:27</div>
<svg class="th" style="left:1077px;top:557px" viewBox="0 0 60 60"><rect width="60" height="60" fill="#7ed3e2"/><path d="M8 60Q14 48 30 46Q48 48 54 60Z" fill="#e8c8b0"/><path d="M14 36Q10 8 30 6Q52 6 48 36Q52 44 44 46H18Q10 44 14 36Z" fill="#6a3a22"/><ellipse cx="31" cy="28" rx="12" ry="15" fill="#e6bca0"/><path d="M22 24H29M33 24H41" stroke="#443" stroke-width="1.5"/></svg>
<div class="hl" style="top:635px"></div>

<div class="rk" style="top:645px">2</div>
<div class="st" style="top:643px">バレー女子日本代表、ネーション<br>ズリーグ日本R登録メンバー14人<br>発表　代表争い激化のリベロは小<br>島満菜美と西村弥菜美【一覧】</div>
<div class="ss" style="top:714px">TBS NEWS DIG Powered by JNN<br>7/8(火) 18:54</div>
<svg class="th" style="left:1077px;top:645px" viewBox="0 0 60 60"><rect width="60" height="60" fill="#f6f4f2"/><path d="M14 60Q16 34 30 32Q46 34 48 60Z" fill="#c8202a"/><rect x="0" y="34" width="12" height="26" fill="#c8202a"/><rect x="52" y="34" width="8" height="26" fill="#c8202a"/><ellipse cx="31" cy="18" rx="9" ry="11" fill="#e0b898"/><path d="M21 18Q20 4 31 5Q42 4 41 18Q36 10 30 10Q24 12 21 18Z" fill="#241814"/><ellipse cx="1" cy="20" rx="6" ry="11" fill="#2a1c18"/><ellipse cx="59" cy="20" rx="5" ry="11" fill="#2a1c18"/></svg>
<div class="hl" style="top:755px"></div>

<div class="rk" style="top:765px">3</div>
<div class="st" style="top:763px">若槻千夏、自身の居住エリアを実<br>名告白「ずっと住んでるんですよ」</div>
<div class="ss" style="top:800px">日刊スポーツ 7/8(火) 18:15</div>
<svg class="th" style="left:1077px;top:764px" viewBox="0 0 60 60"><rect width="60" height="60" fill="#d8e8ee"/><path d="M8 60Q12 48 30 46Q48 46 52 60Z" fill="#3a9ab0"/><path d="M14 26Q14 2 32 2Q50 4 48 26L42 14H22Z" fill="#5a2e18"/><ellipse cx="31" cy="28" rx="15" ry="17" fill="#e8c0a4"/><path d="M16 20Q22 8 44 14L46 22Q30 12 16 24Z" fill="#5a2e18"/></svg>
<div class="hl" style="top:832px"></div>

<div class="rk" style="top:842px">4</div>
<div class="st" style="top:840px">堀江貴文氏、学歴疑惑伊東市長の<br>辞意表明に“たった一文”で反応</div>
<div class="ss" style="top:877px">日刊スポーツ 7/8(火) 11:47</div>
<svg class="th" style="left:1077px;top:841px" viewBox="0 0 60 60"><rect width="60" height="60" fill="#4a4440"/><rect x="0" y="0" width="20" height="60" fill="#6a5a4a"/><path d="M4 60Q8 48 30 46Q52 48 56 60Z" fill="#151515"/><ellipse cx="30" cy="26" rx="17" ry="20" fill="#c8987a"/><path d="M13 22Q12 4 30 5Q50 4 47 22Q44 12 30 12Q18 12 13 22Z" fill="#b89a68"/><ellipse cx="30" cy="36" rx="5" ry="3" fill="#402018"/></svg>
<div class="hl" style="top:909px"></div>

<div class="rk" style="top:919px">5</div>
<div class="st" style="top:917px">ネット大荒れ「謝罪会見にピンク<br>服…」東洋大詐称の市長、ピンク<br>でお詫びに騒然→「すげえな」「話<br>入ってこないw」「謝罪でピンク<br>w」「ＹｏｕＴｕｂｅｒでももう少<br>しマシな格好するぞ」</div>
<div class="ss" style="top:1021px">デイリースポーツ 7/8(火) 16:56</div>
<svg class="th" style="left:1077px;top:919px" viewBox="0 0 60 60"><rect width="60" height="60" fill="#fff"/><rect x="0" y="4" width="18" height="50" fill="#f3f3f3"/><g fill="#aaa"><rect x="1" y="8" width="7" height="1.5"/><rect x="1" y="14" width="9" height="1.5"/><rect x="1" y="20" width="12" height="1.5"/><rect x="1" y="26" width="8" height="1.5"/><rect x="1" y="32" width="12" height="1.5"/><rect x="1" y="38" width="11" height="1.5"/><rect x="1" y="44" width="8" height="1.5"/><rect x="1" y="50" width="6" height="1.5"/></g><rect x="22" y="0" width="38" height="3" fill="#557"/><rect x="22" y="4" width="38" height="14" fill="#7cae88"/><rect x="48" y="8" width="12" height="10" fill="#5b8ac4"/><circle cx="30" cy="22" r="6" fill="#d8b8a0"/><g fill="#bbb"><rect x="24" y="32" width="34" height="1.5"/><rect x="24" y="36" width="34" height="1.5"/><rect x="24" y="40" width="30" height="1.5"/><rect x="24" y="44" width="34" height="1.5"/></g></svg>
<div class="hl" style="top:1048px"></div>

<div class="t" style="left:842px;top:1056px;font-size:13px;font-weight:bold;color:#333">PR</div>
<div class="st" style="top:1056px">お金の悩みに、答えを。</div>
<div class="ss" style="top:1073px">セゾンファンデックス</div>
<svg class="th" style="left:1077px;top:1056px" viewBox="0 0 60 60"><rect width="60" height="60" fill="#f0f2f4"/><rect y="0" width="60" height="32" fill="#6ab0d8"/><rect x="14" y="0" width="16" height="30" fill="#8cc0de"/><rect x="40" y="0" width="20" height="30" fill="#4e7c98"/><rect y="30" width="60" height="18" fill="#cfd4d8"/><path d="M24 28H42L44 46H22Z" fill="#fff"/><rect x="24" y="42" width="18" height="10" fill="#2a5ca8"/><circle cx="33" cy="22" r="4" fill="#c8a088"/><rect y="50" width="60" height="10" fill="#fff"/><rect x="8" y="54" width="44" height="2" fill="#3c6ea0"/></svg>
<div class="t" style="left:1083px;top:1118px;font-size:11px;color:#666">広告</div>
<svg class="b" style="left:1107px;top:1122px" width="27" height="13" viewBox="0 0 27 13"><path d="M6.5 .7L12.5 6.5L6.5 12.3L.5 6.5Z" fill="none" stroke="#555"/><path d="M6.5 3.5V4.5M6.5 6V10" stroke="#555"/><path d="M18 2L26 11M26 2L18 11" stroke="#555"/></svg>
<div class="hl" style="top:1140px"></div>

<!-- comment ranking -->
<div class="hd" style="left:843px;top:1159px">コメントランキング</div>
<div class="hl" style="top:1184px"></div>

<div class="rk" style="top:1194px">1</div>
<div class="st" style="top:1192px">【速報】石破首相 トランプ対日関<br>税25%に「誠に遺憾」　一方で<br>「事実上の据え置きで期間延長」<br>との見方示し国益守るための協議<br>継続を指示</div>
<div class="ss" style="top:1281px">FNNプライムオンライン（フジテレ<br>ビ系） 7/8(火) 9:28</div>
<svg class="th" style="left:1077px;top:1193px" viewBox="0 0 60 60"><rect width="60" height="60" fill="#e6dca8"/><rect x="0" y="0" width="10" height="60" fill="#3a3428"/><path d="M0 60Q4 44 24 40H40Q56 44 60 60Z" fill="#1e2028"/><ellipse cx="30" cy="22" rx="13" ry="18" fill="#b89078"/><path d="M17 20Q18 3 32 3Q46 4 43 20Q38 10 28 11Q20 12 17 20Z" fill="#3c3a38"/><path d="M26 40L32 58L38 42Z" fill="#dde"/><path d="M30 44L32 58L36 44Z" fill="#556"/></svg>
<div class="hl" style="top:1321px"></div>

<div class="rk" style="top:1332px">2</div>
<div class="st" style="top:1329px">「お風呂入り」「未成年飲酒」……<br>元舞妓が国連に訴えた驚きの内容<br>花街の“閉鎖的な体質”は変わるの<br>か</div>
<div class="ss" style="top:1400px">AERA DIGITAL 7/8(火) 10:32</div>
<svg class="th" style="left:1077px;top:1330px" viewBox="0 0 60 60"><rect width="60" height="60" fill="#5c4418"/><rect width="26" height="60" fill="#7c6430"/><path d="M20 60Q24 36 40 34Q56 36 60 60Z" fill="#7a1f20"/><path d="M26 60L36 42L50 60Z" fill="#f0e8e0"/><ellipse cx="40" cy="24" rx="9" ry="11" fill="#f4efe8"/><path d="M29 22Q28 8 40 8Q52 8 51 22Q46 14 40 14Q34 14 29 22Z" fill="#141414"/><circle cx="50" cy="12" r="3.5" fill="#e8d050"/></svg>
<div class="hl" style="top:1425px"></div>

<div class="rk" style="top:1436px">3</div>
<div class="st" style="top:1433px">【速報】トランプ大統領「日本へ<br>の関税は25%に」8月1日から<br>“対抗措置とれば税率上乗せ”と警<br>告も</div>
<div class="ss" style="top:1505px">TBS NEWS DIG Powered by JNN<br>7/8(火) 1:38</div>
<svg class="th" style="left:1077px;top:1434px" viewBox="0 0 60 60"><rect width="60" height="60" fill="#3e4a40"/><rect width="60" height="5" fill="#b89860"/><g fill="#7c5a38"><rect x="3" y="8" width="4" height="30"/><rect x="10" y="8" width="4" height="30"/><rect x="50" y="8" width="4" height="30"/></g><path d="M10 60Q14 40 30 38Q48 40 52 60Z" fill="#1e2a4c"/><ellipse cx="31" cy="24" rx="11" ry="14" fill="#d09070"/><path d="M20 20Q22 8 34 9Q44 10 42 20Q34 12 20 20Z" fill="#d8c080"/><path d="M29 38L32 52L35 38Z" fill="#c81c2c"/><rect y="48" width="60" height="12" fill="#111"/><rect y="50" width="15" height="10" fill="#1a58b0"/><text x="21" y="58" font-size="10" fill="#fff" font-family="DejaVu Sans,sans-serif">▶ 1:29</text></svg>
<div class="hl" style="top:1545px"></div>

<div class="rk" style="top:1555px">4</div>
<div class="st" style="top:1553px">“学歴疑惑”伊東市長は辞職し出直<br>し選へ　苦情殺到で職員が謝罪要<br>求「落胆から怒り」</div>
<div class="ss" style="top:1608px">テレビ朝日系（ANN） 7/8(火)<br>12:21</div>
<svg class="th" style="left:1077px;top:1554px" viewBox="0 0 60 60"><rect width="60" height="60" fill="#d0cdc0"/><path d="M0 60Q2 38 16 36Q30 38 30 60Z" fill="#e8c4cc"/><ellipse cx="15" cy="24" rx="12" ry="16" fill="#6a5a50"/><ellipse cx="16" cy="28" rx="8" ry="10" fill="#d8b8a0"/><path d="M24 60Q26 38 44 34Q58 38 60 60Z" fill="#2c3038"/><ellipse cx="46" cy="22" rx="11" ry="13" fill="#c09478"/><path d="M34 20Q36 4 48 6Q60 8 58 22Q50 12 34 20Z" fill="#2a2420"/><rect x="24" y="34" width="6" height="14" fill="#444"/></svg>
<div class="hl" style="top:1648px"></div>

<div class="rk" style="top:1658px">5</div>
<div class="st" style="top:1656px">「あれが多くの戦闘を止めた」　ト<br>ランプ氏、再び原爆投下引き合い<br>か</div>
<div class="ss" style="top:1710px">毎日新聞 7/8(火) 12:23</div>
<svg class="th" style="left:1077px;top:1657px" viewBox="0 0 60 60"><rect width="60" height="60" fill="#c09a48"/><rect x="0" y="30" width="14" height="30" fill="#d0ac70"/><path d="M0 60Q4 46 22 42H42Q56 46 60 60Z" fill="#1e2c50"/><path d="M24 42L34 60L42 42Z" fill="#eee"/><path d="M31 46L34 60L38 46Z" fill="#7ca8d8"/><ellipse cx="29" cy="28" rx="20" ry="21" fill="#d89468"/><path d="M8 22Q10 2 32 4Q54 6 50 22Q36 10 8 22Z" fill="#e8cc90"/><ellipse cx="28" cy="38" rx="7" ry="3" fill="#a84838"/></svg>
<div class="hl" style="top:1735px"></div>

<div class="t" style="left:842px;top:1744px;font-size:13px;font-weight:bold;color:#333">PR</div>
<div class="st" style="top:1744px">お金の悩みに、答えを。</div>
<div class="ss" style="top:1762px">セゾンファンデックス</div>
<svg class="th" style="left:1077px;top:1744px" viewBox="0 0 60 60"><rect width="60" height="60" fill="#f0f2f4"/><rect y="0" width="60" height="32" fill="#6ab0d8"/><rect x="14" y="0" width="16" height="30" fill="#8cc0de"/><rect x="40" y="0" width="20" height="30" fill="#4e7c98"/><rect y="30" width="60" height="18" fill="#cfd4d8"/><path d="M24 28H42L44 46H22Z" fill="#fff"/><rect x="24" y="42" width="18" height="10" fill="#2a5ca8"/><circle cx="33" cy="22" r="4" fill="#c8a088"/><rect y="50" width="60" height="10" fill="#fff"/><rect x="8" y="54" width="44" height="2" fill="#3c6ea0"/></svg>
<div class="t" style="left:1083px;top:1806px;font-size:11px;color:#666">広告</div>
<svg class="b" style="left:1107px;top:1810px" width="27" height="13" viewBox="0 0 27 13"><path d="M6.5 .7L12.5 6.5L6.5 12.3L.5 6.5Z" fill="none" stroke="#555"/><path d="M6.5 3.5V4.5M6.5 6V10" stroke="#555"/><path d="M18 2L26 11M26 2L18 11" stroke="#555"/></svg>
<div class="hl" style="top:1828px"></div>

<!-- footer -->
<div class="b" style="left:147px;top:2547px;width:990px;height:124px;background:#4d5359"></div>
<div class="fc" style="left:159px;width:228px"></div>
<div class="ft" style="left:168px;top:2567px">アプリ</div>
<div class="fd" style="left:168px;top:2590px">データ先読みで、電車でもサ<br>クサク</div>
<svg class="b" style="left:340px;top:2574px" width="40" height="40" viewBox="0 0 40 40"><circle cx="20" cy="20" r="20" fill="#fff"/><rect x="9" y="10" width="15" height="12" fill="#3c78b4"/><rect x="9" y="23" width="15" height="4" fill="#aaa"/><rect x="26" y="10" width="3" height="17" fill="#667"/><rect x="31" y="10" width="2" height="17" fill="#aab"/><text x="20" y="34" text-anchor="middle" font-size="6" font-weight="bold" fill="#e60039" font-family="Liberation Serif,serif">Yahoo!</text></svg>
<div class="fc" style="left:405px;width:226px"></div>
<div class="ft" style="left:414px;top:2567px">Facebook</div>
<div class="fd" style="left:414px;top:2590px">共同企画、独自制作コンテン<br>ツなどを投稿</div>
<svg class="b" style="left:585px;top:2574px" width="40" height="40" viewBox="0 0 40 40"><circle cx="20" cy="20" r="20" fill="#1877f2"/><path d="M27.5 25.5L28.5 19H22.5V15C22.5 13 23.5 11.5 26 11.5H29V6C29 6 26.5 5.5 24 5.5C19 5.5 16 8.5 16 14V19H10.5V25.5H16V40H22.5V25.5Z" fill="#fff"/></svg>
<div class="fc" style="left:650px;width:228px"></div>
<div class="ft" style="left:660px;top:2567px">X（旧Twitter）</div>
<div class="fd" style="left:660px;top:2590px">リアルタイムでニュースを配<br>信</div>
<svg class="b" style="left:831px;top:2574px" width="40" height="40" viewBox="0 0 40 40"><circle cx="20" cy="20" r="20" fill="#000"/><path d="M9.5 9.5H16L30.5 30.5H24Z" fill="none" stroke="#fff" stroke-width="1.4"/><path d="M29 9.5L21.5 18M18.5 21.5L10.5 30.5" stroke="#fff" stroke-width="1.6"/></svg>
<div class="fc" style="left:896px;width:227px"></div>
<div class="ft" style="left:905px;top:2567px">news HACK</div>
<div class="fd" style="left:905px;top:2590px">Yahoo!ニュースのオウンドメ<br>ディア</div>
<svg class="b" style="left:1076px;top:2574px" width="40" height="40" viewBox="0 0 40 40"><circle cx="20" cy="20" r="20" fill="#1c6fb4"/><path d="M8 4L20 14L32 4L20 0Z" fill="#5eaadc"/><path d="M0 26L10 36L24 40L16 28Z" fill="#125a9c"/><text x="20" y="18" text-anchor="middle" font-size="9.5" fill="#fff" font-family="DejaVu Sans,sans-serif">news</text><text x="20" y="28" text-anchor="middle" font-size="10" font-weight="bold" fill="#fff" font-family="DejaVu Sans,sans-serif">HACK</text></svg>

<div class="fn" style="left:283px">トップ</div><div class="fs" style="left:331px"></div>
<div class="fn" style="left:342px">速報</div><div class="fs" style="left:378px"></div>
<div class="fn" style="left:390px">ライブ</div><div class="fs" style="left:438px"></div>
<div class="fn" style="left:449px">エキスパート</div><div class="fs" style="left:537px"></div>
<div class="fn" style="left:548px">オリジナル</div><div class="fs" style="left:623px"></div>
<div class="fn" style="left:634px">みんなの意見</div><div class="fs" style="left:722px"></div>
<div class="fn" style="left:733px">ランキング</div><div class="fs" style="left:807px"></div>
<div class="fn" style="left:819px">有料</div><div class="fs" style="left:854px"></div>
<div class="fn" style="left:865px">RSS</div><div class="fs" style="left:901px"></div>
<div class="fn" style="left:912px">ニュース提供社</div>

<div class="b ln" style="left:0;width:1284px;top:2681px;text-align:center;font-size:12px;line-height:20px;white-space:nowrap">プライバシーポリシー - プライバシーセンター - 利用規約 - メディアステートメント - 運営方針 - 著作権 - 特定商取引法の表示 - ご意見<span class="k">・</span>ご要望 - ヘルプ<span class="k">・</span>お問い合わせ</div>
<div class="b" style="left:0;width:1284px;top:2701px;text-align:center;font-size:12px;line-height:20px;color:#555">© LY Corporation</div>

</body></html>
